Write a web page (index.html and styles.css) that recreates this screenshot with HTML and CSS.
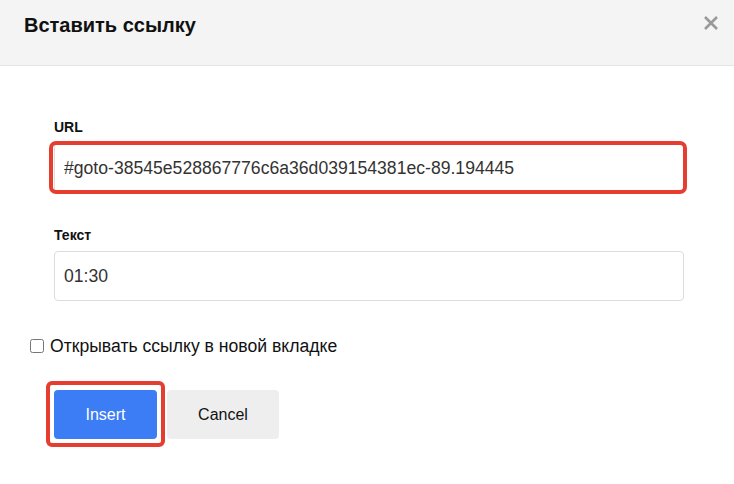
FILE: index.html
```html
<!DOCTYPE html>
<html lang="ru">
<head>
<meta charset="utf-8">
<title>Вставить ссылку</title>
<link rel="stylesheet" href="styles.css">
</head>
<body>
<div class="dialog">
  <div class="header">
    <h1 class="title">Вставить ссылку</h1>
    <button class="close" aria-label="Close">
      <svg width="16" height="16" viewBox="0 0 16 16"><path d="M2 2 L14 14 M14 2 L2 14" stroke="#999" stroke-width="2.6" stroke-linecap="butt"/></svg>
    </button>
  </div>
  <div class="content">
    <div class="field">
      <label class="label">URL</label>
      <div class="hl hl-input">
        <input class="input" type="text" value="#goto-38545e528867776c6a36d039154381ec-89.194445">
      </div>
    </div>
    <div class="field field-text">
      <label class="label">Текст</label>
      <input class="input" type="text" value="01:30">
    </div>
    <label class="check-row">
      <input type="checkbox" class="check">
      <span>Открывать ссылку в новой вкладке</span>
    </label>
    <div class="buttons">
      <div class="hl hl-btn"><button class="btn btn-primary">Insert</button></div>
      <button class="btn btn-secondary">Cancel</button>
    </div>
  </div>
</div>
</body>
</html>
```

FILE: styles.css
```css
* { box-sizing: border-box; }
body {
  margin: 0;
  font-family: "Liberation Sans", Arial, sans-serif;
  background: #fff;
  color: #111;
}
.dialog { width: 734px; height: 484px; background: #fff; }
.header {
  height: 66px;
  background: #f4f4f4;
  border-bottom: 1px solid #e4e4e4;
  display: flex;
  justify-content: space-between;
  align-items: flex-start;
  padding: 13px 15px 0 24px;
}
.title {
  margin: 0;
  font-size: 20px;
  line-height: 24px;
  font-weight: bold;
  color: #111;
}
.close {
  border: 0;
  background: none;
  padding: 0;
  margin-top: 2px;
  width: 16px;
  height: 16px;
  display: block;
}
.close svg { display: block; }
.content {
  padding: 53px 50px 0 30px;
}
.field {
  margin-left: 24px;
  display: flex;
  flex-direction: column;
}
.field-text { margin-top: 34px; }
.label {
  font-size: 14px;
  line-height: 16px;
  font-weight: bold;
  color: #111;
  margin-bottom: 8px;
}
.input {
  width: 630px;
  height: 50px;
  border: 1px solid #dddddd;
  border-radius: 4px;
  padding: 0 9px;
  font-family: "Liberation Sans", Arial, sans-serif;
  font-size: 17.6px;
  color: #333;
  background: #fff;
  display: block;
}
.hl { position: relative; }
.hl::after {
  content: "";
  position: absolute;
  border: 4px solid #e53d30;
  pointer-events: none;
}
.hl-input::after {
  top: -2px; right: -3px; bottom: -1px; left: -5px;
  border-radius: 7px;
}
.hl-btn::after {
  top: -9px; right: -8px; bottom: -8px; left: -8px;
  border-radius: 6px;
}
.check-row {
  margin-top: 35px;
  display: flex;
  align-items: center;
  gap: 6px;
  font-size: 17.6px;
  line-height: 20px;
  color: #111;
}
.check {
  width: 14px;
  height: 14px;
  margin: 0;
}
.buttons {
  margin-top: 34px;
  margin-left: 24px;
  display: flex;
  gap: 10px;
}
.btn {
  height: 49px;
  border: 0;
  border-radius: 4px;
  padding: 0 31px;
  font-family: "Liberation Sans", Arial, sans-serif;
  font-size: 16px;
  display: block;
}
.btn-primary {
  width: 103px;
  background: #3c7cf4;
  color: #fff;
}
.btn-secondary {
  width: 112px;
  background: #eeeeee;
  color: #111;
}
```
